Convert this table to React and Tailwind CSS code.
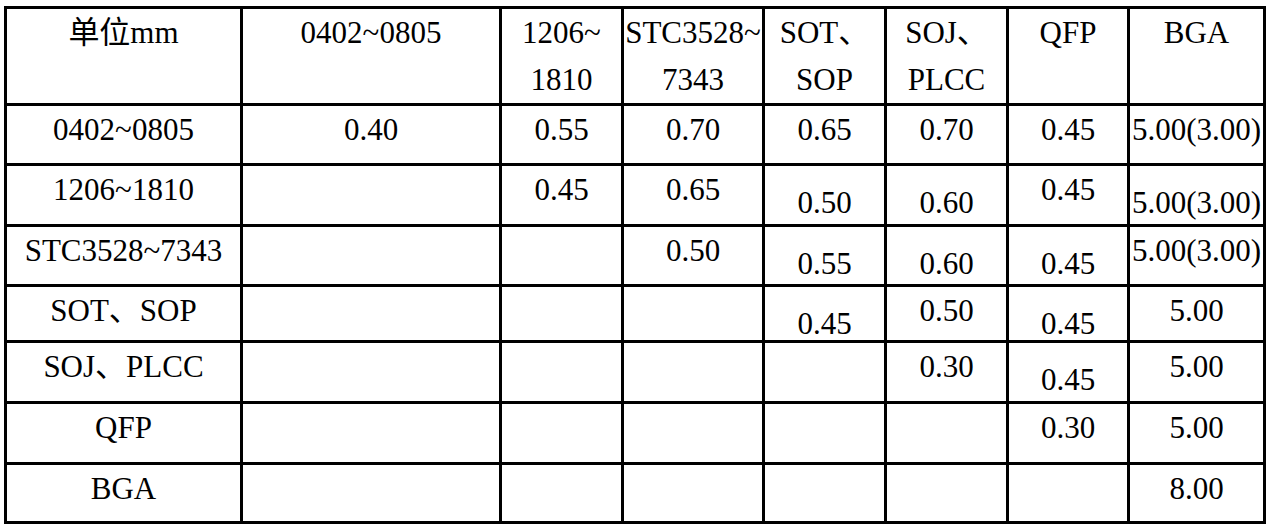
import React from 'react'

// Each cell: [text, low] — low cells sit one step lower in the box, as in the source doc
const header = ['单位mm', '0402~0805', '1206~\n1810', 'STC3528~\n7343', 'SOT、\nSOP', 'SOJ、\nPLCC', 'QFP', 'BGA']

const rows = [
  [['0402~0805'], ['0.40'], ['0.55'], ['0.70'], ['0.65'], ['0.70'], ['0.45'], ['5.00(3.00)']],
  [['1206~1810'], [''], ['0.45'], ['0.65'], ['0.50', true], ['0.60', true], ['0.45'], ['5.00(3.00)', true]],
  [['STC3528~7343'], [''], [''], ['0.50'], ['0.55', true], ['0.60', true], ['0.45', true], ['5.00(3.00)']],
  [['SOT、SOP'], [''], [''], [''], ['0.45', true], ['0.50'], ['0.45', true], ['5.00']],
  [['SOJ、PLCC'], [''], [''], [''], [''], ['0.30'], ['0.45', true], ['5.00']],
  [['QFP'], [''], [''], [''], [''], [''], ['0.30'], ['5.00']],
  [['BGA'], [''], [''], [''], [''], [''], [''], ['8.00']],
]

const App = () => {
  return (
    <div className="min-h-[532px] bg-white pt-[6px] pl-[4px] font-[family-name:Liberation_Serif,Noto_Sans_CJK_SC,serif] text-[31px] leading-[47px] text-black">
      <div className="grid w-fit grid-cols-[233px_256px_119px_138px_119px_119px_118px_133px] grid-rows-[94px_57px_58px_57px_53px_58px_58px_56px] gap-[3px] bg-black p-[3px]">
        {header.map((h, i) => (
          <div key={'h' + i} className="bg-white text-center whitespace-pre-line">
            {h}
          </div>
        ))}
        {rows.map((row, r) =>
          row.map(([text, low], c) => (
            <div
              key={r + '-' + c}
              className={low ? 'bg-white pt-[13px] text-center whitespace-nowrap' : 'bg-white text-center whitespace-nowrap'}
            >
              {text}
            </div>
          ))
        )}
      </div>
    </div>
  )
}

export default App
